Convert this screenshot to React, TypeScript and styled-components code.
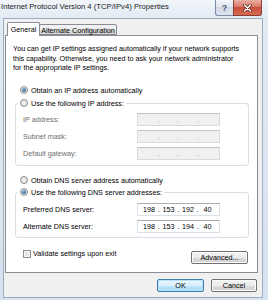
import React from "react";
import styled, { createGlobalStyle } from "styled-components";

const GlobalStyle = createGlobalStyle`
  * { box-sizing: border-box; }
  html, body { margin: 0; padding: 0; }
  body {
    width: 268px;
    height: 300px;
    overflow: hidden;
    font-family: "Liberation Sans", Arial, sans-serif;
  }
`;

const Window = styled.div`
  width: 268px;
  height: 300px;
  display: flex;
  flex-direction: column;
  background: linear-gradient(180deg, #f2f6fa 0%, #e2eaf4 6%, #d6e2ef 100%);
  font-size: 7.2px;
  color: #000;
`;

const TitleBar = styled.div`
  flex: none;
  height: 18px;
  display: flex;
  align-items: flex-start;
`;

const Title = styled.div`
  flex: 1;
  padding-left: 1px;
  font-size: 7.7px;
  line-height: 14px;
  color: #1b1b1b;
  white-space: nowrap;
`;

const CaptionButtons = styled.div`
  display: flex;
  margin-right: 6px;
`;

const HelpButton = styled.div`
  width: 18px;
  height: 16px;
  display: flex;
  align-items: center;
  justify-content: center;
  border: 1px solid #7d8da3;
  border-top: none;
  border-right: none;
  border-radius: 0 0 0 3px;
  background: linear-gradient(180deg, #f3f6fa 0%, #e2e8f0 45%, #cfd9e6 50%, #dde5ef 100%);
  color: #4a5b72;
  font-size: 9px;
  font-weight: bold;
`;

const CloseButton = styled.div`
  width: 29px;
  height: 16px;
  display: flex;
  align-items: center;
  justify-content: center;
  border: 1px solid #8b3d33;
  border-top: none;
  border-radius: 0 0 3px 0;
  background: linear-gradient(180deg, #eab0a3 0%, #d9796a 45%, #c8503d 50%, #d46a52 100%);
`;

const Client = styled.div`
  flex: 1;
  margin: 0 5px 2px 3px;
  padding: 3px 4px 5px 1px;
  display: flex;
  flex-direction: column;
  background: #f0f0f0;
  border: 1px solid #9cadc2;
`;

const TabStrip = styled.div`
  flex: none;
  height: 13px;
  padding-left: 2px;
  display: flex;
  align-items: flex-end;
`;

const Tab = styled.div<{ $active?: boolean }>`
  height: ${(p) => (p.$active ? 14 : 11)}px;
  padding: ${(p) => (p.$active ? "1px 0 0" : "0")};
  line-height: ${(p) => (p.$active ? 12 : 11)}px;
  text-align: center;
  white-space: nowrap;
  border: 1px solid #898c95;
  border-bottom: ${(p) => (p.$active ? "none" : "1px solid #898c95")};
  border-radius: 2px 2px 0 0;
  background: ${(p) =>
    p.$active ? "#fff" : "linear-gradient(180deg, #f3f3f3 0%, #ebebeb 50%, #dddddd 51%, #d5d5d5 100%)"};
  width: ${(p) => (p.$active ? 33 : 78)}px;
  margin: ${(p) => (p.$active ? "0 -1px -1px 0" : "0")};
  position: ${(p) => (p.$active ? "relative" : "static")};
  z-index: ${(p) => (p.$active ? 1 : "auto")};
`;

const Panel = styled.div`
  flex: none;
  height: 238px;
  padding: 8px 8px 0 7px;
  display: flex;
  flex-direction: column;
  background: #fff;
  border: 1px solid #898c95;
`;

const Intro = styled.p`
  margin: 0;
  line-height: 9.5px;
  white-space: nowrap;
`;

const OptionRow = styled.label<{ $top: number }>`
  height: 11px;
  margin: ${(p) => p.$top}px 0 0 7px;
  display: flex;
  align-items: center;
  gap: 3px;
  white-space: nowrap;
`;

const Radio = styled.span<{ $checked?: boolean }>`
  flex: none;
  width: 8px;
  height: 8px;
  border-radius: 50%;
  border: 1px solid #8e8f8f;
  background: radial-gradient(circle at 50% 50%, #f6f6f6 0%, #d6d6d6 100%);
  display: flex;
  align-items: center;
  justify-content: center;
  &::after {
    content: "";
    display: ${(p) => (p.$checked ? "block" : "none")};
    width: 4px;
    height: 4px;
    border-radius: 50%;
    background: radial-gradient(circle at 40% 35%, #86b7e0 0%, #2a5d92 70%, #1d446e 100%);
  }
`;

const GroupBox = styled.fieldset<{ $top: number }>`
  width: 234px;
  margin: ${(p) => p.$top}px 0 0 2px;
  padding: 0 0 ${(p) => (p.$top === 2 ? 5 : 4)}px 0;
  border: 1px solid #d5dfe5;
  border-radius: 3px;
  min-width: 0;
`;

const Legend = styled.legend`
  margin-left: 2px;
  padding: 0 2px;
  height: 11px;
  display: flex;
  align-items: center;
  gap: 3px;
  white-space: nowrap;
  background: #fff;
`;

const FieldGrid = styled.div<{ $top: number }>`
  margin-top: ${(p) => p.$top}px;
  padding-left: 7px;
  display: grid;
  grid-template-columns: 114px 83px;
  grid-auto-rows: 13px;
  row-gap: 4px;
  align-items: center;
`;

const FieldLabel = styled.span<{ $disabled?: boolean }>`
  color: ${(p) => (p.$disabled ? "#6d6d6d" : "#000")};
  white-space: nowrap;
`;

const IpBox = styled.div<{ $disabled?: boolean }>`
  height: 13px;
  padding: 0 3px 0 2.75px;
  display: flex;
  align-items: center;
  background: ${(p) => (p.$disabled ? "#f0f0f0" : "#fff")};
  border: 1px solid ${(p) => (p.$disabled ? "#dadada" : "#dde1e7")};
  border-top-color: ${(p) => (p.$disabled ? "#c4c4c4" : "#abadb3")};
  color: ${(p) => (p.$disabled ? "#9a9a9a" : "#000")};
`;

const Octet = styled.span`
  width: 16.5px;
  text-align: center;
`;

const Dot = styled.span`
  width: 3px;
  text-align: center;
`;

const BottomRow = styled.div`
  margin-top: 10px;
  display: flex;
  align-items: flex-start;
`;

const CheckRow = styled.label`
  height: 11px;
  margin-left: 10px;
  display: flex;
  align-items: center;
  gap: 2px;
  white-space: nowrap;
`;

const CheckBox = styled.span`
  flex: none;
  width: 8px;
  height: 8px;
  border: 1px solid #8e8f8f;
  background: linear-gradient(135deg, #d8d8d8 0%, #f4f4f4 100%);
  box-shadow: inset 0 0 0 1px #f6f6f6;
`;

const Button = styled.div<{ $width: number; $default?: boolean }>`
  width: ${(p) => p.$width}px;
  height: 13px;
  display: flex;
  align-items: center;
  justify-content: center;
  white-space: nowrap;
  border-radius: 2px;
  border: 1px solid ${(p) => (p.$default ? "#3c7fb1" : "#707070")};
  background: ${(p) =>
    p.$default
      ? "linear-gradient(180deg, #eaf6fd 0%, #d9f0fc 50%, #bee6fd 51%, #a7d9f5 100%)"
      : "linear-gradient(180deg, #f2f2f2 0%, #ebebeb 50%, #dddddd 51%, #cfcfcf 100%)"};
  box-shadow: inset 0 0 0 1px ${(p) => (p.$default ? "#b6e2fa" : "#fcfcfc")};
`;

const AdvancedButton = styled(Button)`
  margin: 3px 1px 0 auto;
`;

const Footer = styled.div`
  margin: 6px 1px 0 0;
  display: flex;
  justify-content: flex-end;
  gap: 7px;
`;

const CloseGlyph = () => (
  <svg width="9" height="8" viewBox="0 0 9 8">
    <path d="M1.5 1 L7.5 7 M7.5 1 L1.5 7" stroke="#5b2119" strokeWidth="3" strokeLinecap="round" />
    <path d="M1.5 1 L7.5 7 M7.5 1 L1.5 7" stroke="#ffffff" strokeWidth="1.6" strokeLinecap="round" />
  </svg>
);

const IpField = ({ values, disabled }: { values?: string[]; disabled?: boolean }) => {
  const parts = values ?? ["", "", "", ""];
  return (
    <IpBox $disabled={disabled}>
      {parts.map((v, i) => (
        <React.Fragment key={i}>
          {i > 0 && <Dot>.</Dot>}
          <Octet>{v}</Octet>
        </React.Fragment>
      ))}
    </IpBox>
  );
};

export default function App() {
  return (
    <>
      <GlobalStyle />
      <Window>
        <TitleBar>
          <Title>Internet Protocol Version 4 (TCP/IPv4) Properties</Title>
          <CaptionButtons>
            <HelpButton>?</HelpButton>
            <CloseButton>
              <CloseGlyph />
            </CloseButton>
          </CaptionButtons>
        </TitleBar>
        <Client>
          <TabStrip>
            <Tab $active>General</Tab>
            <Tab>Alternate Configuration</Tab>
          </TabStrip>
          <Panel>
            <Intro>
              You can get IP settings assigned automatically if your network supports
              <br />
              this capability. Otherwise, you need to ask your network administrator
              <br />
              for the appropriate IP settings.
            </Intro>
            <OptionRow $top={12}>
              <Radio $checked />
              Obtain an IP address automatically
            </OptionRow>
            <GroupBox $top={2}>
              <Legend>
                <Radio />
                Use the following IP address:
              </Legend>
              <FieldGrid $top={4.5}>
                <FieldLabel $disabled>IP address:</FieldLabel>
                <IpField disabled />
                <FieldLabel $disabled>Subnet mask:</FieldLabel>
                <IpField disabled />
                <FieldLabel $disabled>Default gateway:</FieldLabel>
                <IpField disabled />
              </FieldGrid>
            </GroupBox>
            <OptionRow $top={8.5}>
              <Radio />
              Obtain DNS server address automatically
            </OptionRow>
            <GroupBox $top={1}>
              <Legend>
                <Radio $checked />
                Use the following DNS server addresses:
              </Legend>
              <FieldGrid $top={5.5}>
                <FieldLabel>Preferred DNS server:</FieldLabel>
                <IpField values={["198", "153", "192", "40"]} />
                <FieldLabel>Alternate DNS server:</FieldLabel>
                <IpField values={["198", "153", "194", "40"]} />
              </FieldGrid>
            </GroupBox>
            <BottomRow>
              <CheckRow>
                <CheckBox />
                Validate settings upon exit
              </CheckRow>
              <AdvancedButton $width={57}>Advanced...</AdvancedButton>
            </BottomRow>
          </Panel>
          <Footer>
            <Button $width={47} $default>
              OK
            </Button>
            <Button $width={46}>Cancel</Button>
          </Footer>
        </Client>
      </Window>
    </>
  );
}
